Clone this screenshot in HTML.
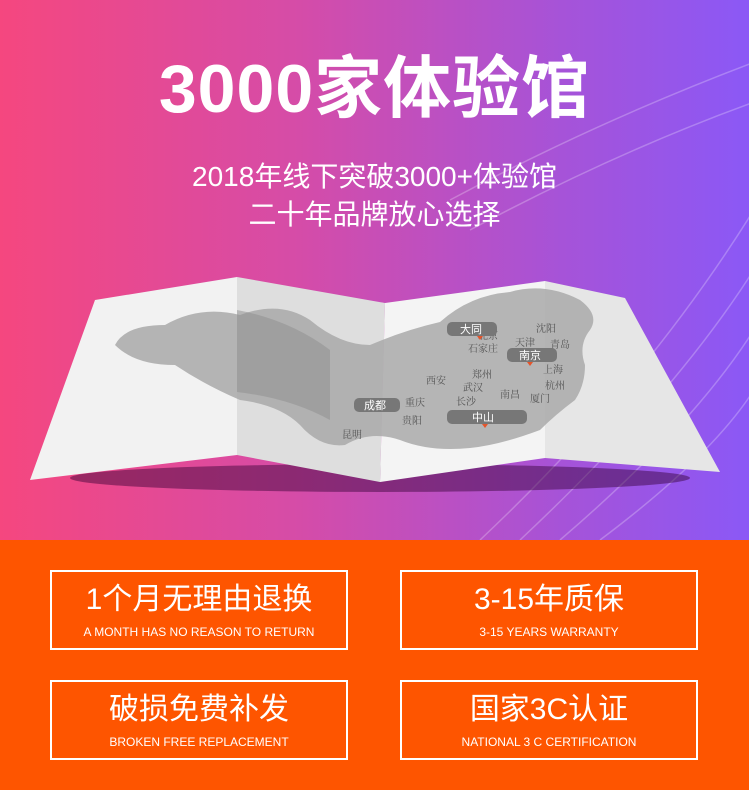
<!DOCTYPE html>
<html><head><meta charset="utf-8"><style>
*{margin:0;padding:0;box-sizing:border-box}
body{width:749px;height:790px;overflow:hidden;font-family:"Liberation Sans","Noto Sans CJK SC",sans-serif;position:relative}
.top{position:absolute;left:0;top:0;width:749px;height:540px;background:linear-gradient(90deg,#f5477f 0%,#d54ca8 40%,#a653d8 75%,#8b58f6 100%)}
.bot{position:absolute;left:0;top:540px;width:749px;height:250px;background:#fe5500}
h1{position:absolute;left:0;width:749px;top:50px;text-align:center;color:#fff;font-size:68px;font-weight:bold;line-height:78px;letter-spacing:1px}
.sub{position:absolute;left:0;width:749px;top:158px;text-align:center;color:#fff;font-size:28px;line-height:38px}
.box{position:absolute;width:298px;height:80px;border:2px solid #fff;color:#fff;text-align:center}
.box b{display:block;font-weight:normal;font-size:30px;line-height:34px;margin-top:11px}
.box i{display:block;font-style:normal;font-size:12px;line-height:14px;margin-top:8px}
</style></head><body>
<div class="top">
<svg width="749" height="540" style="position:absolute;left:0;top:0">
<g fill="none" stroke="rgba(255,255,255,0.25)" stroke-width="1.5">
<path d="M480 540 Q650 380 760 200"/><path d="M520 540 Q680 390 760 260"/><path d="M560 540 Q700 420 760 320"/><path d="M600 540 Q720 450 760 380"/><path d="M450 200 Q600 120 760 60"/><path d="M470 230 Q620 150 760 100"/>
</g>
<ellipse cx="380" cy="478" rx="310" ry="14" fill="rgba(50,0,50,0.45)"/>
<polygon points="95,300 237,277 237,455 30,480" fill="#f2f2f2"/>
<polygon points="237,277 385,303 380,482 237,455" fill="#dedede"/>
<polygon points="385,303 545,281 545,458 380,482" fill="#f4f4f4"/>
<polygon points="545,281 625,298 720,472 545,458" fill="#e6e6e6"/>
<path d="M115 345 Q125 325 165 325 Q200 305 240 315 Q280 300 310 320 Q340 345 370 345 Q405 330 440 322 Q470 295 510 292 Q545 282 580 300 Q600 315 590 330 Q578 345 585 365 Q585 385 575 400 Q555 415 540 430 Q500 445 470 448 Q430 452 400 440 Q370 430 345 445 Q320 448 300 425 Q280 405 240 400 Q205 385 175 365 Q135 365 115 345Z" fill="#a9a9a9" opacity="0.85"/>
<path d="M237 310 Q290 320 330 350 L330 420 Q290 398 237 392Z" fill="#8e8e8e" opacity="0.5"/>
<g font-size="10" fill="#555" font-family="'Noto Serif CJK SC',serif">
<text x="478" y="339">北京</text><text x="515" y="346">天津</text><text x="468" y="352">石家庄</text><text x="536" y="332">沈阳</text><text x="550" y="348">青岛</text>
<text x="543" y="373">上海</text><text x="545" y="389">杭州</text><text x="530" y="402">厦门</text><text x="500" y="398">南昌</text>
<text x="472" y="378">郑州</text><text x="426" y="384">西安</text><text x="463" y="391">武汉</text><text x="456" y="405">长沙</text><text x="405" y="406">重庆</text><text x="402" y="424">贵阳</text><text x="342" y="438">昆明</text>
</g>
<g fill="#777"><rect x="447" y="322" width="50" height="14" rx="5"/><rect x="507" y="348" width="50" height="14" rx="5"/><rect x="354" y="398" width="46" height="14" rx="5"/><rect x="447" y="410" width="80" height="14" rx="5"/></g>
<g fill="#e4542b"><polygon points="477,336 483,336 480,340"/><polygon points="527,362 533,362 530,366"/><polygon points="482,424 488,424 485,428"/></g>
<g font-size="11" fill="#fff"><text x="460" y="333">大同</text><text x="519" y="359">南京</text><text x="364" y="409">成都</text><text x="472" y="421">中山</text></g>
</svg>
<h1>3000家体验馆</h1>
<div class="sub">2018年线下突破3000+体验馆<br>二十年品牌放心选择</div>
</div>
<div class="bot"></div>
<div class="box" style="left:50px;top:570px"><b>1个月无理由退换</b><i>A MONTH HAS NO REASON TO RETURN</i></div>
<div class="box" style="left:400px;top:570px"><b>3-15年质保</b><i>3-15 YEARS WARRANTY</i></div>
<div class="box" style="left:50px;top:680px"><b>破损免费补发</b><i>BROKEN FREE REPLACEMENT</i></div>
<div class="box" style="left:400px;top:680px"><b>国家3C认证</b><i>NATIONAL 3 C CERTIFICATION</i></div>
</body></html>
